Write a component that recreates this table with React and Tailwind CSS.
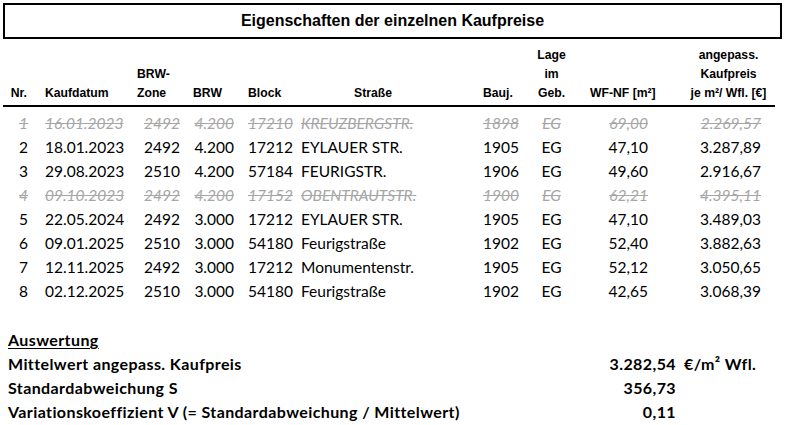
import React from "react";

const rows = [
  { nr: "1", d: "16.01.2023", z: "2492", brw: "4.200", b: "17210", s: "KREUZBERGSTR.", j: "1898", l: "EG", wf: "69,00", kp: "2.269,57", x: true },
  { nr: "2", d: "18.01.2023", z: "2492", brw: "4.200", b: "17212", s: "EYLAUER STR.", j: "1905", l: "EG", wf: "47,10", kp: "3.287,89" },
  { nr: "3", d: "29.08.2023", z: "2510", brw: "4.200", b: "57184", s: "FEURIGSTR.", j: "1906", l: "EG", wf: "49,60", kp: "2.916,67" },
  { nr: "4", d: "09.10.2023", z: "2492", brw: "4.200", b: "17152", s: "OBENTRAUTSTR.", j: "1900", l: "EG", wf: "62,21", kp: "4.395,11", x: true },
  { nr: "5", d: "22.05.2024", z: "2492", brw: "3.000", b: "17212", s: "EYLAUER STR.", j: "1905", l: "EG", wf: "47,10", kp: "3.489,03" },
  { nr: "6", d: "09.01.2025", z: "2510", brw: "3.000", b: "54180", s: "Feurigstraße", j: "1902", l: "EG", wf: "52,40", kp: "3.882,63" },
  { nr: "7", d: "12.11.2025", z: "2492", brw: "3.000", b: "17212", s: "Monumentenstr.", j: "1905", l: "EG", wf: "52,12", kp: "3.050,65" },
  { nr: "8", d: "02.12.2025", z: "2510", brw: "3.000", b: "54180", s: "Feurigstraße", j: "1902", l: "EG", wf: "42,65", kp: "3.068,39" },
];

const grid = "grid grid-cols-[30px_105px_51px_54px_57px_178px_53px_47px_105px_105px]";

export default function App() {
  return (
    <div className="w-[785px] h-[425px] bg-white text-black overflow-hidden">
      <div className="mx-[3px] mt-[3px] h-[36px] border-2 border-black flex items-center justify-center font-['Liberation_Sans',Arial,sans-serif] font-bold text-[16px]">
        Eigenschaften der einzelnen Kaufpreise
      </div>

      <div className={`${grid} mt-[7px] items-end font-['Liberation_Sans',Arial,sans-serif] font-bold text-[12.2px] leading-[19px] pb-[2px]`}>
        <div className="text-right pr-[3px]">Nr.</div>
        <div className="pl-[15px]">Kaufdatum</div>
        <div className="pl-[2px]">BRW-<br />Zone</div>
        <div className="pl-[7px]">BRW</div>
        <div className="pl-[8px]">Block</div>
        <div className="pl-[57px]">Straße</div>
        <div className="pl-[8px]">Bauj.</div>
        <div className="text-center">Lage<br />im<br />Geb.</div>
        <div className="pl-[15px]">WF-NF [m²]</div>
        <div className="text-center pr-[8px]">angepass.<br />Kaufpreis<br />je m²/ Wfl. [€]</div>
      </div>
      <div className="mx-[3px] w-[772px] h-[2px] bg-black"></div>

      <div className="mt-[4px] font-['Lato',sans-serif] text-[15.5px]">
        {rows.map((r) => (
          <div
            key={r.nr}
            className={`${grid} h-[24px] items-center leading-[24px] ${r.x ? "italic text-[#a6a6a6] line-through" : ""}`}
          >
            <div className="text-right pr-[2px]">{r.nr}</div>
            <div className="pl-[15px]">{r.d}</div>
            <div className="text-right pr-[6px]">{r.z}</div>
            <div className="text-right pr-[6px]">{r.brw}</div>
            <div className="pl-[8px]">{r.b}</div>
            <div className="pl-[4px]">{r.s}</div>
            <div className="pl-[8px]">{r.j}</div>
            <div className="text-center">{r.l}</div>
            <div className="text-right pr-[32px]">{r.wf}</div>
            <div className="text-right pr-[24px]">{r.kp}</div>
          </div>
        ))}
      </div>

      <div className="mt-[25px] font-['Lato',sans-serif] font-bold text-[16px] tracking-[0.4px] leading-[24px]">
        <div className="pl-[8px] underline underline-offset-2">Auswertung</div>
        <div className="grid grid-cols-[600px_76px_109px]">
          <div className="pl-[8px]">Mittelwert angepass. Kaufpreis</div>
          <div className="text-right">3.282,54</div>
          <div className="pl-[8px]">€/m² Wfl.</div>
        </div>
        <div className="grid grid-cols-[600px_76px_109px]">
          <div className="pl-[8px]">Standardabweichung S</div>
          <div className="text-right">356,73</div>
          <div></div>
        </div>
        <div className="grid grid-cols-[600px_76px_109px]">
          <div className="pl-[8px]">Variationskoeffizient V (= Standardabweichung / Mittelwert)</div>
          <div className="text-right">0,11</div>
          <div></div>
        </div>
      </div>
    </div>
  );
}
